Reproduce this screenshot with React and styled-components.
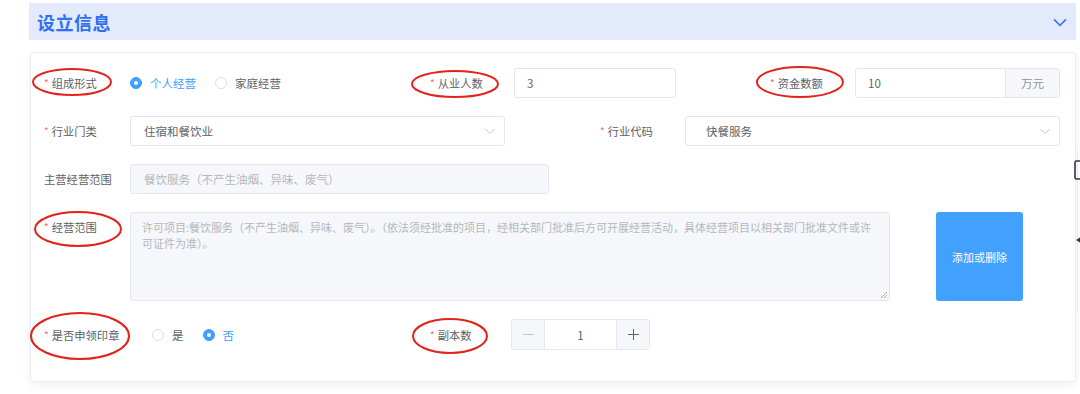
import React from 'react';
import styled, { createGlobalStyle } from 'styled-components';

const GlobalStyle = createGlobalStyle`
  html, body {
    margin: 0;
    padding: 0;
    background: #fff;
    font-family: 'Noto Sans CJK SC', 'Noto Sans', sans-serif;
  }
`;

const Page = styled.div`
  position: relative;
  width: 1080px;
  height: 394px;
  padding: 3px 0 0 29px;
  box-sizing: border-box;
  overflow: hidden;
`;

const Header = styled.div`
  width: 1047px;
  height: 37px;
  background: #e2eafc;
  display: flex;
  align-items: center;
  justify-content: space-between;
  padding: 0 8px 0 8px;
  box-sizing: border-box;
`;

const Title = styled.h2`
  margin: 0;
  font-size: 18px;
  font-weight: 700;
  color: #2f6ff1;
  letter-spacing: 0.5px;
`;

const Card = styled.div`
  margin: 12px 0 0 1px;
  width: 1046px;
  height: 330px;
  box-sizing: border-box;
  border: 1px solid #e6ebf5;
  border-radius: 3px;
  box-shadow: 0 3px 8px rgba(0, 0, 0, 0.06);
  padding: 15px 15px 0 13px;
  display: flex;
  flex-direction: column;
  gap: 18px;
`;

const Row = styled.div`
  display: flex;
  align-items: ${(p) => (p.$top ? 'flex-start' : 'center')};
  min-height: 30px;
`;

const Item = styled.div`
  display: flex;
  align-items: ${(p) => (p.$top ? 'flex-start' : 'center')};
  width: ${(p) => (p.$w ? `${p.$w}px` : 'auto')};
  flex: ${(p) => (p.$w ? '0 0 auto' : '1')};
`;

const Label = styled.label`
  flex: 0 0 ${(p) => p.$w || 86}px;
  font-size: 11.3px;
  color: #606266;
  line-height: 30px;
  white-space: nowrap;
`;

const Star = styled.span`
  color: #f56c6c;
  font-size: 10px;
  margin-right: 3px;
  vertical-align: 1px;
`;

const Input = styled.div`
  width: ${(p) => p.$w}px;
  height: 30px;
  box-sizing: border-box;
  border: 1px solid #e4e7ed;
  border-radius: 3px;
  background: ${(p) => (p.$disabled ? '#f5f7fa' : '#fff')};
  color: ${(p) => (p.$disabled ? '#b4b7bd' : '#606266')};
  font-size: 11.5px;
  display: flex;
  align-items: center;
  padding: 0 8px 0 ${(p) => p.$pad || 12}px;
  justify-content: space-between;
`;

const AddonGroup = styled.div`
  display: flex;
  width: ${(p) => p.$w}px;
  height: 30px;
  box-sizing: border-box;
  border: 1px solid #e4e7ed;
  border-radius: 3px;
  overflow: hidden;
  font-size: 11.5px;
`;

const AddonValue = styled.div`
  flex: 1;
  display: flex;
  align-items: center;
  padding: 0 12px;
  color: #606266;
`;

const Addon = styled.div`
  width: 53px;
  border-left: 1px solid #e4e7ed;
  background: #f5f7fa;
  color: #909399;
  display: flex;
  align-items: center;
  justify-content: center;
`;

const Radios = styled.div`
  display: flex;
  align-items: center;
  gap: 19px;
  margin-left: ${(p) => p.$ml || 0}px;
`;

const Radio = styled.span`
  display: inline-flex;
  align-items: center;
  gap: 8px;
  font-size: 11.5px;
  color: ${(p) => (p.$on ? '#409eff' : '#606266')};
`;

const Dot = styled.span`
  width: 12px;
  height: 12px;
  box-sizing: border-box;
  border-radius: 50%;
  border: 1px solid ${(p) => (p.$on ? '#409eff' : '#dcdfe6')};
  background: ${(p) => (p.$on ? '#409eff' : '#fff')};
  display: inline-flex;
  align-items: center;
  justify-content: center;

  &::after {
    content: '';
    width: 4px;
    height: 4px;
    border-radius: 50%;
    background: #fff;
    display: ${(p) => (p.$on ? 'block' : 'none')};
  }
`;

const TextArea = styled.div`
  position: relative;
  width: 760px;
  height: 89px;
  box-sizing: border-box;
  border: 1px solid #e4e7ed;
  border-radius: 3px;
  background: #f5f7fa;
  color: #b4b7bd;
  font-size: 11px;
  line-height: 16px;
  padding: 6px 14px 0 11px;
`;

const Grip = styled.svg`
  position: absolute;
  right: 1px;
  bottom: 1px;
`;

const ActionButton = styled.button`
  margin-left: 46px;
  width: 87px;
  height: 89px;
  border: none;
  border-radius: 3px;
  background: #42a0ff;
  color: #fff;
  font-size: 11px;
  font-family: inherit;
`;

const Stepper = styled.div`
  display: flex;
  width: 139px;
  height: 31px;
  box-sizing: border-box;
  border: 1px solid #e4e7ed;
  border-radius: 3px;
  overflow: hidden;
`;

const StepBtn = styled.div`
  width: 32px;
  background: #f5f7fa;
  display: flex;
  align-items: center;
  justify-content: center;
  ${(p) => (p.$left ? 'border-right' : 'border-left')}: 1px solid #e4e7ed;
`;

const StepValue = styled.div`
  flex: 1;
  display: flex;
  align-items: center;
  justify-content: center;
  font-size: 11.5px;
  color: #606266;
`;

const Marks = styled.svg`
  position: absolute;
  left: 0;
  top: 0;
  pointer-events: none;
`;

const EdgeLine = styled.div`
  position: absolute;
  left: 1077px;
  top: 150px;
  width: 1px;
  height: 160px;
  background: #e6ebf5;
`;

const Chevron = ({ color = '#c0c4cc', size = 12, w = 1 }) => (
  <svg width={size} height={size} viewBox="0 0 12 12" fill="none">
    <path d="M1.5 4l4.5 4.5L10.5 4" stroke={color} strokeWidth={w} />
  </svg>
);

const RadioOpt = ({ on, children }) => (
  <Radio $on={on}>
    <Dot $on={on} />
    {children}
  </Radio>
);

const Req = ({ children, w }) => (
  <Label $w={w}>
    <Star>*</Star>
    {children}
  </Label>
);

const ellipses = [
  { cx: 72, cy: 82, rx: 39, ry: 13 },
  { cx: 455, cy: 84, rx: 43, ry: 13 },
  { cx: 800, cy: 82, rx: 43, ry: 15 },
  { cx: 78, cy: 229, rx: 43, ry: 17 },
  { cx: 80, cy: 336, rx: 49, ry: 23 },
  { cx: 450, cy: 336, rx: 37, ry: 17 },
];

export default function App() {
  return (
    <>
      <GlobalStyle />
      <Page>
        <Header>
          <Title>设立信息</Title>
          <Chevron color="#3b78f2" size={16} w={1.3} />
        </Header>
        <Card>
          <Row>
            <Item $w={386}>
              <Req>组成形式</Req>
              <Radios>
                <RadioOpt on>个人经营</RadioOpt>
                <RadioOpt>家庭经营</RadioOpt>
              </Radios>
            </Item>
            <Item $w={340}>
              <Req w={84}>从业人数</Req>
              <Input $w={162}>3</Input>
            </Item>
            <Item>
              <Req w={85}>资金数额</Req>
              <AddonGroup $w={205}>
                <AddonValue>10</AddonValue>
                <Addon>万元</Addon>
              </AddonGroup>
            </Item>
          </Row>
          <Row>
            <Item $w={556}>
              <Req>行业门类</Req>
              <Input $w={375} $pad={13}>
                住宿和餐饮业
                <Chevron />
              </Input>
            </Item>
            <Item>
              <Req w={85}>行业代码</Req>
              <Input $w={375} $pad={20}>
                快餐服务
                <Chevron />
              </Input>
            </Item>
          </Row>
          <Row>
            <Item>
              <Label>主营经营范围</Label>
              <Input $w={419} $pad={13} $disabled>
                餐饮服务（不产生油烟、异味、废气）
              </Input>
            </Item>
          </Row>
          <Row $top>
            <Item $top>
              <Req>经营范围</Req>
              <TextArea>
                许可项目:餐饮服务（不产生油烟、异味、废气）。（依法须经批准的项目，经相关部门批准后方可开展经营活动，具体经营项目以相关部门批准文件或许可证件为准）。
                <Grip width="8" height="8" viewBox="0 0 8 8">
                  <path d="M7 1L1 7M7 4L4 7" stroke="#909399" strokeWidth="0.8" />
                </Grip>
              </TextArea>
              <ActionButton>添加或删除</ActionButton>
            </Item>
          </Row>
          <Row>
            <Item $w={386}>
              <Req>是否申领印章</Req>
              <Radios $ml={22}>
                <RadioOpt>是</RadioOpt>
                <RadioOpt on>否</RadioOpt>
              </Radios>
            </Item>
            <Item>
              <Req w={81}>副本数</Req>
              <Stepper>
                <StepBtn $left>
                  <svg width="11" height="11" viewBox="0 0 11 11">
                    <path d="M0 5.5h11" stroke="#c0c4cc" strokeWidth="1" />
                  </svg>
                </StepBtn>
                <StepValue>1</StepValue>
                <StepBtn>
                  <svg width="11" height="11" viewBox="0 0 11 11">
                    <path d="M0 5.5h11M5.5 0v11" stroke="#606266" strokeWidth="1" />
                  </svg>
                </StepBtn>
              </Stepper>
            </Item>
          </Row>
        </Card>
        <EdgeLine />
        <Marks width="1080" height="394" viewBox="0 0 1080 394">
          {ellipses.map((e, i) => (
            <ellipse key={i} {...e} fill="none" stroke="#e3221b" strokeWidth="2" />
          ))}
          <path d="M1080 161h-3.5a1.5 1.5 0 0 0-1.5 1.5v15a1.5 1.5 0 0 0 1.5 1.5H1080" fill="none" stroke="#303540" strokeWidth="1.6" />
          <path d="M1076 240l4-2.5v5z" fill="#303540" />
        </Marks>
      </Page>
    </>
  );
}
